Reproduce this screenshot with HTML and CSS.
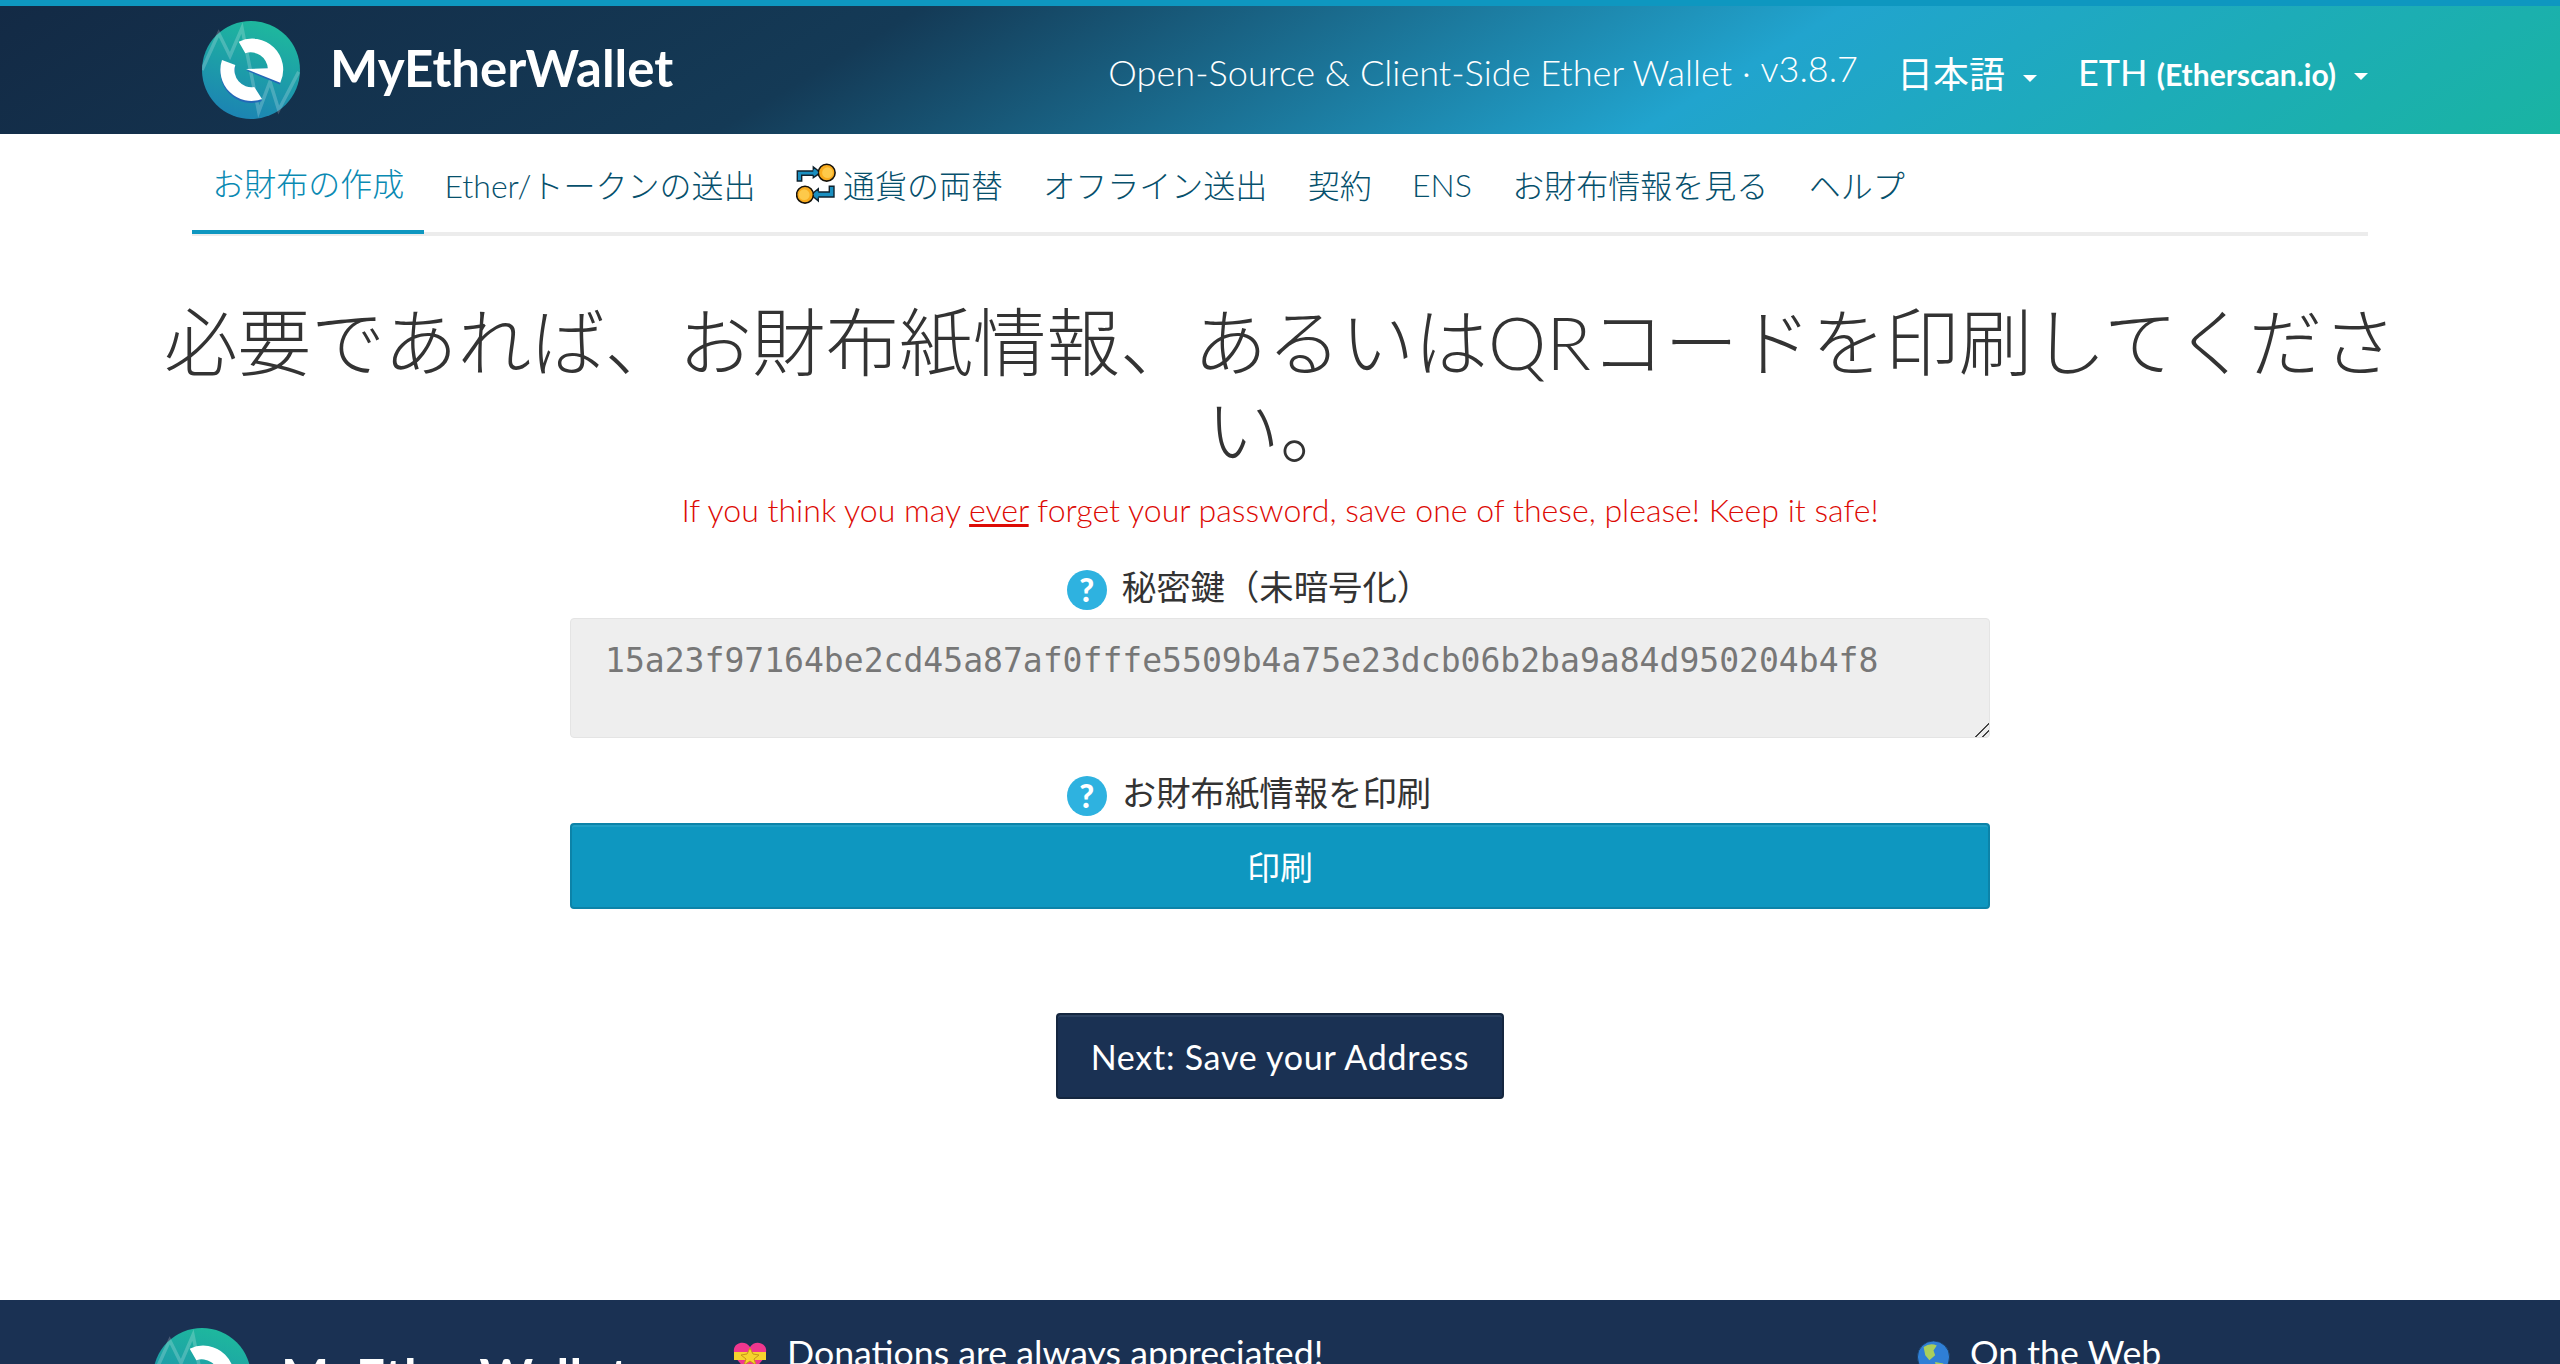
FILE: index.html
```html
<!DOCTYPE html>
<html lang="ja">
<head>
    <meta charset="UTF-8">
    <meta name="viewport" content="width=device-width, initial-scale=1.0">
    <title>MyEtherWallet</title>
    <link rel="stylesheet" href="styles.css">
</head>
<body>
    <header class="site-header">
        <div class="header-inner">
            <a class="brand" href="#">
                <svg class="brand-logo" viewBox="0 0 98 98">
                    <defs>
                        <linearGradient id="logo-grad" x1="0.65" y1="0" x2="0.35" y2="1">
                            <stop offset="0" stop-color="#1eb99d"/>
                            <stop offset="1" stop-color="#1c83b3"/>
                        </linearGradient>
                    </defs>
                    <circle cx="49" cy="49" r="49" fill="url(#logo-grad)"/>
                    <polyline points="0,49 16.7,12.3 28,35 40,7 56.7,90.7 68,60.7 76.7,89 96.7,50.7" fill="none" stroke="#fff" stroke-opacity="0.2" stroke-width="3.5"/>
                    <path d="M20 41A31 31 0 0 0 60 80L52.3 68A17 17 0 0 1 33.3 46Z" fill="#2468b8"/>
                    <path d="M20 39A31 31 0 0 0 60 78L52.3 66A17 17 0 0 1 33.3 44Z" fill="#fff"/>
                    <path d="M78.3 61.7 78 63.5 44 49.5 65.8 47.3Z" fill="#2468b8"/>
                    <path d="M36.7 20.7A31 31 0 0 1 78.3 61.7L44 48 65.8 47.3A17 17 0 0 0 43.3 32.3Z" fill="#fff"/>
                </svg>
                <span class="brand-name">MyEtherWallet</span>
            </a>
            <div class="header-right">
                <span class="tagline">Open-Source &amp; Client-Side Ether Wallet · <sup class="version">v3.8.7</sup></span>
                <a class="dropdown dropdown-lang" href="#">日本語<i class="caret"></i></a>
                <a class="dropdown" href="#">ETH <small class="node">(Etherscan.io)</small><i class="caret"></i></a>
            </div>
        </div>
    </header>

    <nav class="tabs">
        <ul class="tab-list">
            <li class="tab active"><a href="#">お財布の作成</a></li>
            <li class="tab"><a href="#">Ether/トークンの送出</a></li>
            <li class="tab">
                <a href="#">
                    <svg class="swap-icon" viewBox="0 0 40 42">
                        <path d="M1.3 8H17.3V4L24.7 9.7 17.3 14.7V12.3H5.7V18H1.3Z" fill="#1a8fc0" stroke="#10222e" stroke-width="1.4"/>
                        <path d="M38 23.3V34H22.3V38L15 31.7 22.3 25.7V29H33.3V23.3Z" fill="#1a8fc0" stroke="#10222e" stroke-width="1.4"/>
                        <circle cx="30.7" cy="9.7" r="8.4" fill="#f9ab1d" stroke="#17120a" stroke-width="1.6"/>
                        <circle cx="31.5" cy="9.7" r="5.4" fill="#fdc94a"/>
                        <circle cx="9" cy="31.7" r="8.4" fill="#f9ab1d" stroke="#17120a" stroke-width="1.6"/>
                        <circle cx="8.2" cy="31.7" r="5.4" fill="#fdc94a"/>
                        <path d="M17.3 6.5 22.5 9.7 17.3 12.5Z" fill="#1a8fc0"/>
                        <path d="M22.3 28 17.2 31.7 22.3 35Z" fill="#1a8fc0"/>
                    </svg>
                    通貨の両替
                </a>
            </li>
            <li class="tab"><a href="#">オフライン送出</a></li>
            <li class="tab"><a href="#">契約</a></li>
            <li class="tab"><a href="#">ENS</a></li>
            <li class="tab"><a href="#">お財布情報を見る</a></li>
            <li class="tab"><a href="#">ヘルプ</a></li>
        </ul>
    </nav>

    <main class="content">
        <h1 class="title">必要であれば、お財布紙情報、あるいはQRコードを印刷してください。</h1>
        <p class="warning">If you think you may <u>ever</u> forget your password, save one of these, please! Keep it safe!</p>

        <section class="field">
            <h4 class="field-label"><span class="help">?</span>秘密鍵（未暗号化）</h4>
            <textarea class="key-box" readonly>15a23f97164be2cd45a87af0fffe5509b4a75e23dcb06b2ba9a84d950204b4f8</textarea>
        </section>

        <section class="field field-print">
            <h4 class="field-label"><span class="help">?</span>お財布紙情報を印刷</h4>
            <a class="btn btn-print" href="#">印刷</a>
        </section>

        <a class="btn btn-next" href="#">Next: Save your Address</a>
    </main>

    <footer class="site-footer">
        <div class="footer-col footer-brand">
            <svg class="brand-logo" viewBox="0 0 98 98">
                <circle cx="49" cy="49" r="49" fill="url(#logo-grad)"/>
                <polyline points="0,49 16.7,12.3 28,35 40,7 56.7,90.7 68,60.7 76.7,89 96.7,50.7" fill="none" stroke="#fff" stroke-opacity="0.2" stroke-width="3.5"/>
                <path d="M20 39A31 31 0 0 0 60 78L52.3 66A17 17 0 0 1 33.3 44Z" fill="#fff"/>
                <path d="M36.7 20.7A31 31 0 0 1 78.3 61.7L44 48 65.8 47.3A17 17 0 0 0 43.3 32.3Z" fill="#fff"/>
            </svg>
            <span class="brand-name">MyEtherWallet</span>
        </div>
        <div class="footer-col footer-donate">
            <svg class="foot-emoji" viewBox="0 0 34 34">
                <path d="M17 32C4 22 0 15 1 9 2 2 13 0 17 7 21 0 32 2 33 9 34 15 30 22 17 32Z" fill="#f0378e"/>
                <rect x="1" y="12" width="32" height="8" fill="#f6d32d"/>
                <path d="M17 8 20 14 26 15 21 19 23 25 17 21 11 25 13 19 8 15 14 14Z" fill="#f6d32d" stroke="#c9951a"/>
            </svg>
            <span>Donations are always appreciated!</span>
        </div>
        <div class="footer-col footer-web">
            <svg class="foot-emoji" viewBox="0 0 40 40">
                <circle cx="20" cy="20" r="19.5" fill="#2f7fd6" stroke="#1b3a5c"/>
                <path d="M8 8 Q16 2 24 6 L20 12 22 18 15 24 10 18Z" fill="#a9cf5c"/>
                <path d="M22 26 L32 28 28 38 23 36Z" fill="#a9cf5c"/>
            </svg>
            <span>On the Web</span>
        </div>
    </footer>
</body>
</html>
```

FILE: styles.css
```css
* {
    box-sizing: border-box;
}

html, body {
    height: 1364px;
    overflow: hidden;
}

body {
    margin: 0;
    display: flex;
    flex-direction: column;
    font-family: Lato, "Noto Sans CJK JP", sans-serif;
    font-weight: 300;
    color: #333;
    background: #fff;
}

a {
    color: inherit;
    text-decoration: none;
}

/* header */
.site-header {
    height: 134px;
    flex: none;
    border-top: 6px solid #0e97c0;
    background: linear-gradient(149deg, #132a45, #143a56, #21a4ce, #19b4a2);
    color: #fff;
}

.header-inner {
    width: 2176px;
    height: 100%;
    margin: 0 auto;
    padding-left: 10px;
    display: flex;
    align-items: center;
    justify-content: space-between;
}

.brand {
    display: flex;
    align-items: center;
    gap: 30px;
}

.brand-logo {
    width: 98px;
    height: 98px;
    flex: none;
}

.brand-name {
    font-weight: 700;
    font-size: 51px;
    color: #fff;
    padding-bottom: 6px;
}

.header-right {
    display: flex;
    align-items: center;
    font-size: 36.15px;
    padding-top: 4px;
}

.version {
    font-size: 36px;
    line-height: 0;
    position: relative;
    top: 9px;
}

.dropdown {
    margin-left: 41px;
    font-weight: 400;
    font-size: 36px;
}

.dropdown-lang {
    margin-left: 39px;
}

.node {
    font-size: 30px;
    font-weight: 700;
}

.caret {
    display: inline-block;
    margin-left: 18px;
    vertical-align: middle;
    border-top: 7px solid #fff;
    border-left: 7px solid transparent;
    border-right: 7px solid transparent;
}

/* tabs */
.tabs {
    width: 2176px;
    margin: 0 auto;
    flex: none;
}

.tab-list {
    list-style: none;
    margin: 0;
    padding: 0;
    height: 102px;
    display: flex;
    border-bottom: 4px solid #ececec;
}

.tab {
    height: 100px;
    padding: 0 20.2px;
    display: flex;
    align-items: center;
    font-size: 32px;
    color: #06506c;
}

.tab a {
    display: flex;
    align-items: center;
    gap: 7px;
}

.tab.active {
    color: #0a8ab3;
    border-bottom: 4px solid #0e97c0;
}

.swap-icon {
    width: 40px;
    height: 42px;
}

/* main */
.content {
    flex: 1;
    display: flex;
    flex-direction: column;
    align-items: center;
    padding-top: 62px;
}

.title {
    width: 2240px;
    margin: 0;
    font-size: 73.6px;
    font-weight: 300;
    line-height: 88px;
    text-align: center;
}

.warning {
    margin: 14px 0 0;
    font-size: 32.1px;
    line-height: 44px;
    color: #dd0b05;
}

.field {
    width: 1420px;
    margin-top: 30px;
}

.field-print {
    margin-top: 30px;
}

.field-label {
    margin: 0;
    padding-right: 62px;
    display: flex;
    justify-content: center;
    align-items: center;
    gap: 15px;
    height: 46px;
    font-size: 34.4px;
    font-weight: 400;
}

.help {
    width: 40px;
    height: 40px;
    margin-top: 10px;
    border-radius: 50%;
    background: #2eb2e0;
    color: #fff;
    font-size: 32px;
    font-weight: 900;
    line-height: 40px;
    text-align: center;
}

.key-box {
    display: block;
    width: 100%;
    height: 120px;
    margin-top: 10px;
    padding: 20px 34px 16px;
    background: #eee;
    border: 1px solid #e4e4e4;
    border-radius: 4px;
    outline: none;
    font-family: "DejaVu Sans Mono", monospace;
    font-size: 33.05px;
    line-height: 44px;
    color: #777;
}

.key-box::-webkit-resizer {
    background: linear-gradient(135deg, transparent 52%, #444 52%, #444 60%, transparent 60%, transparent 74%, #444 74%, #444 82%, transparent 82%);
}

.btn {
    display: flex;
    align-items: center;
    justify-content: center;
    border-radius: 4px;
    color: #fff;
    font-weight: 400;
    box-shadow: inset 0 2px 0 rgba(255, 255, 255, 0.08);
}

.btn-print {
    height: 86px;
    margin-top: 9px;
    background: #0e97c0;
    border: 2px solid #0c83a8;
    font-size: 33px;
}

.btn-next {
    width: 448px;
    height: 86px;
    margin-top: 104px;
    background: #1a3153;
    border: 2px solid #14263f;
    font-size: 34px;
    letter-spacing: 0.75px;
}

/* footer */
.site-footer {
    height: 64px;
    flex: none;
    overflow: hidden;
    padding: 28px 0 0 153px;
    display: flex;
    background: #1a3153;
    color: #fff;
    font-weight: 400;
    font-size: 35.7px;
}

.footer-col {
    display: flex;
    align-items: flex-start;
}

.footer-brand {
    width: 580px;
    gap: 30px;
}

.footer-brand .brand-name {
    padding: 18px 0 0;
    letter-spacing: 0.4px;
}

.footer-donate {
    width: 1184px;
    gap: 20px;
    padding-top: 3px;
}

.footer-web {
    gap: 20px;
    padding-top: 3px;
}

.foot-emoji {
    width: 34px;
    height: 36px;
    flex: none;
    margin-top: 8px;
}

.footer-web .foot-emoji {
    width: 33px;
    height: 42px;
    margin-top: 5px;
}
```
